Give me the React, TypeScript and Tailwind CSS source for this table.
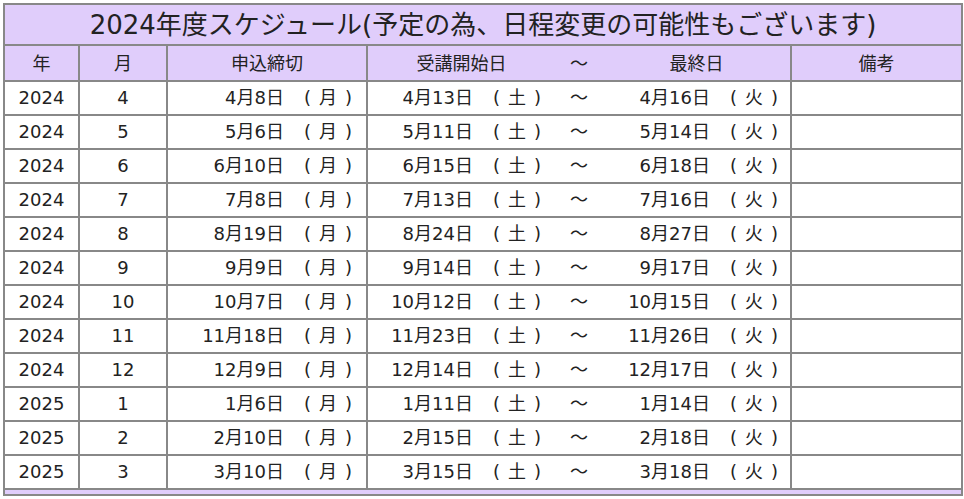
const rows = [
  { y: "2024", m: "4", d: "4月8日", s: "4月13日", e: "4月16日" },
  { y: "2024", m: "5", d: "5月6日", s: "5月11日", e: "5月14日" },
  { y: "2024", m: "6", d: "6月10日", s: "6月15日", e: "6月18日" },
  { y: "2024", m: "7", d: "7月8日", s: "7月13日", e: "7月16日" },
  { y: "2024", m: "8", d: "8月19日", s: "8月24日", e: "8月27日" },
  { y: "2024", m: "9", d: "9月9日", s: "9月14日", e: "9月17日" },
  { y: "2024", m: "10", d: "10月7日", s: "10月12日", e: "10月15日" },
  { y: "2024", m: "11", d: "11月18日", s: "11月23日", e: "11月26日" },
  { y: "2024", m: "12", d: "12月9日", s: "12月14日", e: "12月17日" },
  { y: "2025", m: "1", d: "1月6日", s: "1月11日", e: "1月14日" },
  { y: "2025", m: "2", d: "2月10日", s: "2月15日", e: "2月18日" },
  { y: "2025", m: "3", d: "3月10日", s: "3月15日", e: "3月18日" },
];

const font = { fontFamily: '"DejaVu Sans", "Noto Sans CJK JP", sans-serif' };

function DateCell({ date, day }: { date: string; day: string }) {
  return (
    <span className="whitespace-nowrap">
      {date}
      <span className="ml-[20px]">(</span>
      <span className="mx-[8px]">{day}</span>
      <span>)</span>
    </span>
  );
}

export default function App() {
  return (
    <div className="bg-white pl-[3px] pt-[3px] text-[#222]" style={font}>
      <table className="w-[958px] table-fixed border-collapse border-2 border-[#888]">
        <colgroup>
          <col className="w-[75px]" />
          <col className="w-[88px]" />
          <col className="w-[200px]" />
          <col className="w-[188px]" />
          <col className="w-[48px]" />
          <col className="w-[188px]" />
          <col className="w-[171px]" />
        </colgroup>
        <thead>
          <tr className="h-[41px] bg-[#e0cdfb]">
            <th colSpan={7} className="border-2 border-[#888] p-0 text-center text-[26px] font-normal leading-none">
              2024年度スケジュール(予定の為、日程変更の可能性もございます)
            </th>
          </tr>
          <tr className="h-[36px] bg-[#e0cdfb] text-[18px]">
            <th className="border-2 border-[#888] p-0 font-normal">年</th>
            <th className="border-2 border-[#888] p-0 font-normal">月</th>
            <th className="border-2 border-[#888] p-0 font-normal">申込締切</th>
            <th className="border-y-2 border-l-2 border-[#888] p-0 font-normal">受講開始日</th>
            <th className="border-y-2 border-[#888] p-0 font-normal">～</th>
            <th className="border-y-2 border-r-2 border-[#888] p-0 font-normal">最終日</th>
            <th className="border-2 border-[#888] p-0 font-normal">備考</th>
          </tr>
        </thead>
        <tbody className="text-[18px] leading-none">
          {rows.map((r) => (
            <tr key={r.y + r.m} className="h-[34px]">
              <td className="border-2 border-[#888] p-0 text-center">{r.y}</td>
              <td className="border-2 border-[#888] p-0 text-center">{r.m}</td>
              <td className="border-2 border-[#888] p-0 pr-[14px] text-right">
                <DateCell date={r.d} day="月" />
              </td>
              <td className="border-y-2 border-l-2 border-[#888] p-0 pr-[14px] text-right">
                <DateCell date={r.s} day="土" />
              </td>
              <td className="border-y-2 border-[#888] p-0 text-center">～</td>
              <td className="border-y-2 border-r-2 border-[#888] p-0 pr-[12px] text-right">
                <DateCell date={r.e} day="火" />
              </td>
              <td className="border-2 border-[#888] p-0"></td>
            </tr>
          ))}
          <tr className="h-[6px] bg-[#e0cdfb]">
            <td colSpan={7} className="border-2 border-[#888] p-0"></td>
          </tr>
        </tbody>
      </table>
    </div>
  );
}
